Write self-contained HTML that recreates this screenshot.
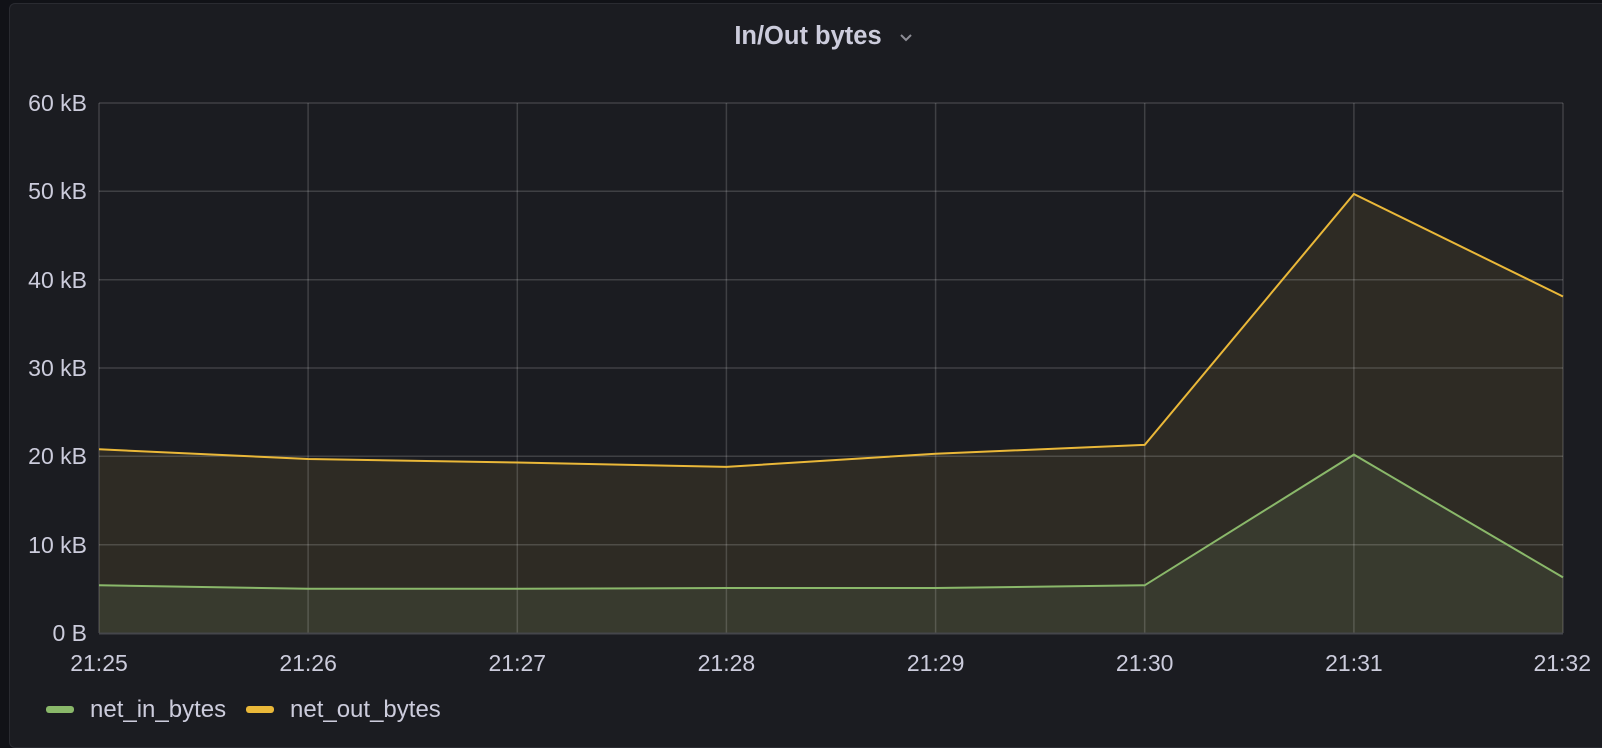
<!DOCTYPE html>
<html><head><meta charset="utf-8"><style>
html,body{margin:0;padding:0;background:#111217;width:1602px;height:740px;overflow:hidden}
.p{position:absolute;left:9px;top:3px;width:1600px;height:745px;background:#1b1c21;border:1px solid #2a2b31;border-radius:6px;box-sizing:border-box}
svg{position:absolute;left:0;top:0}
text{font-family:"Liberation Sans",sans-serif;fill:#ccccdc}
</style></head><body>
<div class="p"></div>
<svg width="1602" height="740" viewBox="0 0 1602 740">
<text x="808" y="44" font-size="25.5" font-weight="bold" text-anchor="middle" fill="#d8d9e3">In/Out bytes</text>
<path d="M901 35 l5 5 l5 -5" stroke="#8e8e96" stroke-width="2" fill="none"/>
<polygon fill="#2e2b24" points="99,633 99,449.3 308.1,459 517.3,462.5 726.4,466.9 935.6,453.7 1144.7,444.9 1353.9,194 1563,296.5 1563,633"/>
<polygon fill="#383a2e" points="99,633 99,585.3 308.1,588.8 517.3,588.8 726.4,588 935.6,588 1144.7,585.3 1353.9,454.6 1563,577.4 1563,633"/>
<g stroke="rgba(255,255,255,0.16)" stroke-width="1.5">
<line x1="99" y1="103" x2="1563" y2="103"/>
<line x1="99" y1="191.3" x2="1563" y2="191.3"/>
<line x1="99" y1="279.7" x2="1563" y2="279.7"/>
<line x1="99" y1="368" x2="1563" y2="368"/>
<line x1="99" y1="456.3" x2="1563" y2="456.3"/>
<line x1="99" y1="544.7" x2="1563" y2="544.7"/>
<line x1="99" y1="103" x2="99" y2="633"/>
<line x1="308.1" y1="103" x2="308.1" y2="633"/>
<line x1="517.3" y1="103" x2="517.3" y2="633"/>
<line x1="726.4" y1="103" x2="726.4" y2="633"/>
<line x1="935.6" y1="103" x2="935.6" y2="633"/>
<line x1="1144.7" y1="103" x2="1144.7" y2="633"/>
<line x1="1353.9" y1="103" x2="1353.9" y2="633"/>
<line x1="1563" y1="103" x2="1563" y2="633"/>
</g>
<line x1="99" y1="633.5" x2="1563" y2="633.5" stroke="#45464b" stroke-width="2"/>
<polyline fill="none" stroke="#eab839" stroke-width="2" points="99,449.3 308.1,459 517.3,462.5 726.4,466.9 935.6,453.7 1144.7,444.9 1353.9,194 1563,296.5"/>
<polyline fill="none" stroke="#8ab86a" stroke-width="2" points="99,585.3 308.1,588.8 517.3,588.8 726.4,588 935.6,588 1144.7,585.3 1353.9,454.6 1563,577.4"/>
<g font-size="23" text-anchor="end">
<text x="87" y="111">60 kB</text>
<text x="87" y="199">50 kB</text>
<text x="87" y="288">40 kB</text>
<text x="87" y="376">30 kB</text>
<text x="87" y="464">20 kB</text>
<text x="87" y="553">10 kB</text>
<text x="87" y="641">0 B</text>
</g>
<g font-size="23" text-anchor="middle">
<text x="99" y="671">21:25</text>
<text x="308.1" y="671">21:26</text>
<text x="517.3" y="671">21:27</text>
<text x="726.4" y="671">21:28</text>
<text x="935.6" y="671">21:29</text>
<text x="1144.7" y="671">21:30</text>
<text x="1353.9" y="671">21:31</text>
<text x="1563" y="671" text-anchor="end" dx="28">21:32</text>
</g>
<rect x="46" y="706" width="28" height="7" rx="3" fill="#8ab86a"/>
<text x="90" y="717" font-size="24">net_in_bytes</text>
<rect x="246" y="706" width="28" height="7" rx="3" fill="#eab839"/>
<text x="290" y="717" font-size="24">net_out_bytes</text>
</svg>
</body></html>
